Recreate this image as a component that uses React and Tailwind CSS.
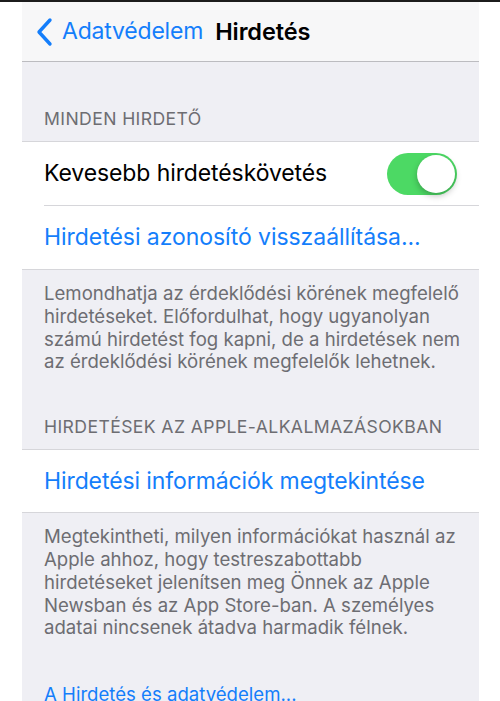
import React from 'react';

const font = { fontFamily: 'Inter, "Noto Sans", sans-serif' };

const Toggle = () => (
  <div className="relative w-[70px] h-[42px] rounded-full bg-[#4cd964]">
    <div className="absolute right-[2px] top-[2px] w-[38px] h-[38px] rounded-full bg-white shadow-[0_3px_6px_rgba(0,0,0,0.25)]" />
  </div>
);

const Header = ({ children, className }) => (
  <div className={`px-[22px] pb-[12px] text-[17.6px] leading-[21px] text-[#6d6d72] tracking-[0.4px] ${className}`}>
    {children}
  </div>
);

const Footer = ({ children, className }) => (
  <div className={`pl-[22px] pr-[14px] pt-[12px] text-[18.6px] leading-[22.8px] text-[#6d6d72] ${className}`}>
    {children}
  </div>
);

export default function App() {
  return (
    <div className="w-[500px] h-[701px] overflow-hidden bg-white flex flex-col" style={font}>
      <div className="h-[2px] bg-[#1c1c1c] shrink-0" />
      <div className="flex flex-1 min-h-0">
        <div className="w-[22px] shrink-0 bg-white" />
        <div className="w-[457px] shrink-0 bg-[#efeff4] flex flex-col">
          {/* Nav bar */}
          <div className="h-[60px] shrink-0 bg-[#f7f7f8] border-b border-[#bcbcc0] flex items-center pl-[12px]">
            <svg width="20" height="30" viewBox="0 0 20 30" className="shrink-0">
              <path d="M16 3 L5 15 L16 27" fill="none" stroke="#147efb" strokeWidth="3.4" strokeLinecap="round" strokeLinejoin="round" />
            </svg>
            <span className="ml-[8px] text-[23px] text-[#147efb] tracking-[-0.2px]">Adatvédelem</span>
            <span className="ml-[12px] text-[23.5px] font-semibold text-black tracking-[-0.1px]">Hirdetés</span>
          </div>

          <Header className="pt-[46px]">MINDEN HIRDETŐ</Header>

          <div className="bg-white border-y border-[#d6d6da]">
            <div className="h-[63px] flex items-center justify-between pl-[22px] pr-[22px]">
              <span className="text-[23px] text-black tracking-[-0.1px]">Kevesebb hirdetéskövetés</span>
              <Toggle />
            </div>
            <div className="ml-[22px] h-px bg-[#d6d6da]" />
            <div className="h-[63px] flex items-center pl-[22px]">
              <span className="text-[23px] text-[#147efb] tracking-[-0.05px]">Hirdetési azonosító visszaállítása...</span>
            </div>
          </div>

          <Footer>
            Lemondhatja az érdeklődési körének megfelelő hirdetéseket. Előfordulhat, hogy ugyanolyan számú hirdetést fog kapni, de a hirdetések nem az érdeklődési körének megfelelők lehetnek.
          </Footer>

          <Header className="pt-[43px]">HIRDETÉSEK AZ APPLE-ALKALMAZÁSOKBAN</Header>

          <div className="bg-white border-y border-[#d6d6da]">
            <div className="h-[62px] flex items-center pl-[22px]">
              <span className="text-[23px] text-[#147efb] tracking-[-0.1px]">Hirdetési információk megtekintése</span>
            </div>
          </div>

          <Footer>
            Megtekintheti, milyen információkat használ az Apple ahhoz, hogy testreszabottabb hirdetéseket jelenítsen meg Önnek az Apple Newsban és az App Store-ban. A személyes adatai nincsenek átadva harmadik félnek.
          </Footer>

          <div className="px-[22px] pt-[44px] text-[18.6px] leading-[23px] text-[#147efb]">
            A Hirdetés és adatvédelem...
          </div>
        </div>
        <div className="flex-1 bg-white" />
      </div>
    </div>
  );
}
